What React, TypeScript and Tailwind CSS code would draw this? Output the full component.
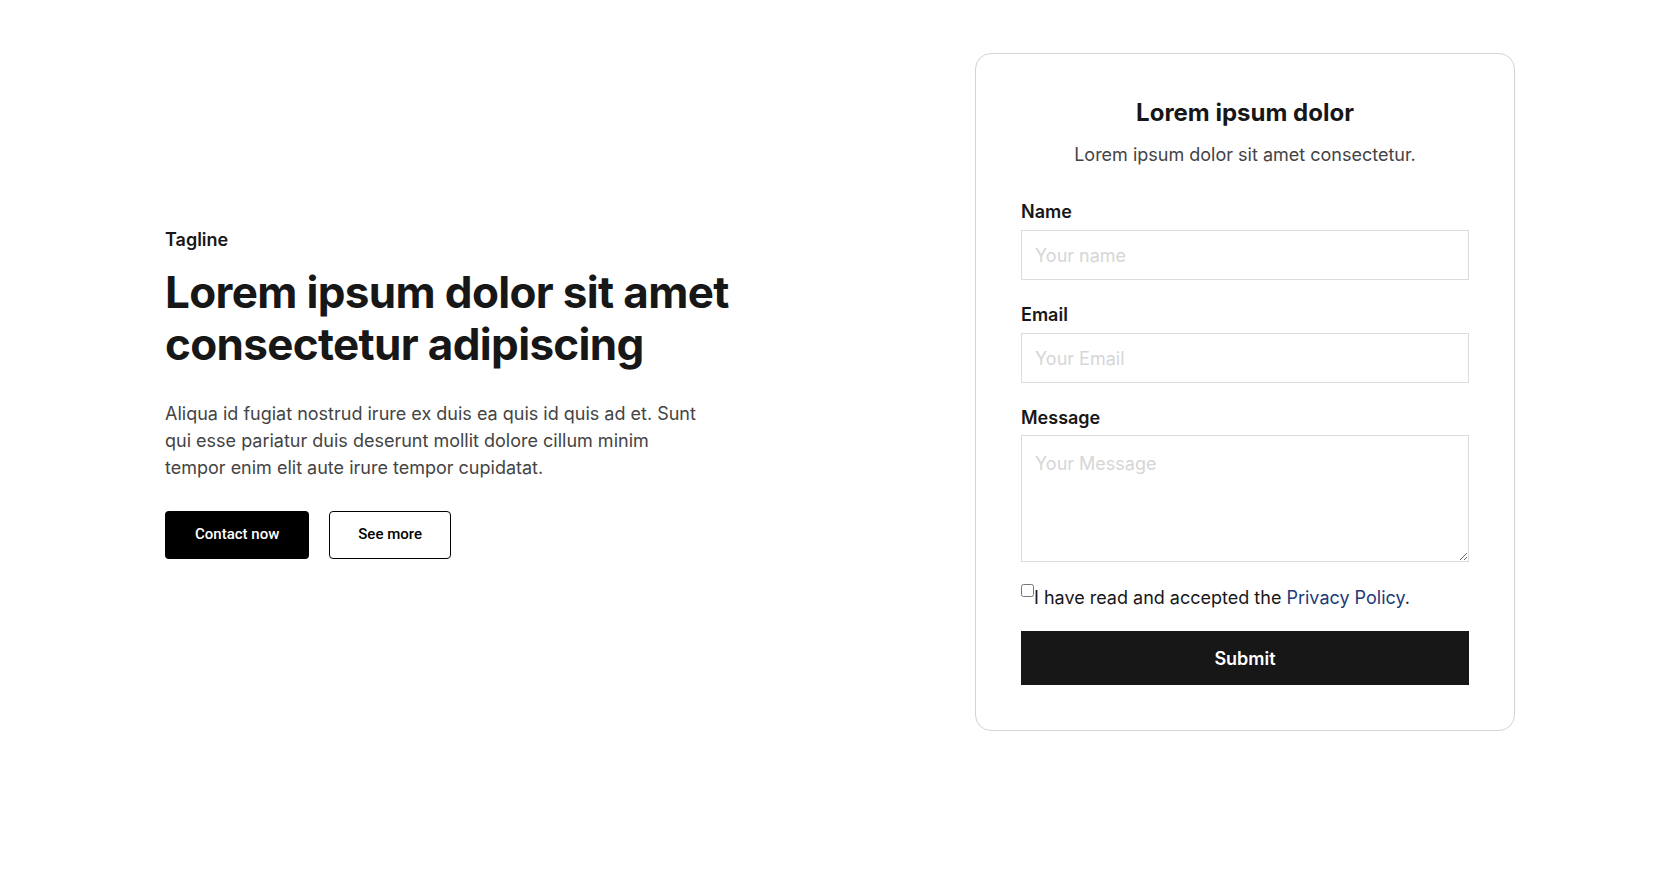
import React from 'react';

const Field: React.FC<{ label: string; placeholder: string; type?: string }> = ({ label, placeholder, type = 'text' }) => {
  return (
    <div className="flex flex-col">
      <label className="text-[18px] leading-[28px] font-semibold text-[#171717] mt-[1px] mb-[4px]">{label}</label>
      <input
        type={type}
        placeholder={placeholder}
        className="h-[50px] w-full border border-[#dcdcdc] bg-white px-[13px] text-[18px] text-[#171717] placeholder:text-[#d6d6d6] outline-none"
      />
    </div>
  );
};

export default function App() {
  return (
    <div className="min-h-[876px] bg-white font-['Inter',sans-serif] text-[#171717]">
      <section className="mx-auto flex w-[1350px] items-center justify-between pt-[53px]">
        <div className="flex w-[620px] flex-col">
          <p className="text-[18px] leading-[28px] font-semibold">Tagline</p>
          <h1 className="mt-[12px] text-[44px] leading-[52px] font-bold tracking-[-0.015em]">
            Lorem ipsum dolor sit amet consectetur adipiscing
          </h1>
          <p className="mt-[30px] max-w-[545px] text-[18px] leading-[27px] text-[#444444]">
            Aliqua id fugiat nostrud irure ex duis ea quis id quis ad et. Sunt qui esse pariatur duis deserunt mollit dolore cillum minim tempor enim elit aute irure tempor cupidatat.
          </p>
          <div className="mt-[30px] flex gap-5 font-['Roboto',sans-serif]">
            <a href="#" className="flex h-[48px] items-center rounded-[4px] bg-black px-[30px] text-[15px] font-medium text-white">
              Contact now
            </a>
            <a href="#" className="flex h-[48px] items-center rounded-[4px] border border-black bg-white px-[28px] text-[15px] font-medium text-black">
              See more
            </a>
          </div>
        </div>

        <div className="w-[540px] rounded-2xl border border-[#d4d4d4] px-[45px] pt-[43px] pb-[45px]">
          <h2 className="text-center text-[24px] leading-[32px] font-bold">Lorem ipsum dolor</h2>
          <p className="mt-[12px] text-center text-[18px] leading-[27px] text-[#444444]">Lorem ipsum dolor sit amet consectetur.</p>
          <form className="mt-[29px] flex flex-col gap-5" onSubmit={(e) => e.preventDefault()}>
            <Field label="Name" placeholder="Your name" />
            <Field label="Email" placeholder="Your Email" type="email" />
            <div className="flex flex-col">
              <label className="text-[18px] leading-[28px] font-semibold text-[#171717] mt-[1px] mb-[3px]">Message</label>
              <textarea
                placeholder="Your Message"
                className="h-[127px] w-full border border-[#dcdcdc] bg-white px-[13px] py-[14px] text-[18px] leading-[27px] placeholder:text-[#d6d6d6] outline-none"
              />
            </div>
            <label className="mt-[2px] flex items-start text-[18px] leading-[27px] text-[#171717]">
              <input type="checkbox" className="m-0 h-[13px] w-[13px] shrink-0" />
              <span>
                I have read and accepted the <a href="#" className="text-[#1e3a78]">Privacy Policy</a>.
              </span>
            </label>
            <button type="submit" className="h-[54px] w-full bg-[#171717] text-[18px] font-semibold text-white">
              Submit
            </button>
          </form>
        </div>
      </section>
    </div>
  );
}
